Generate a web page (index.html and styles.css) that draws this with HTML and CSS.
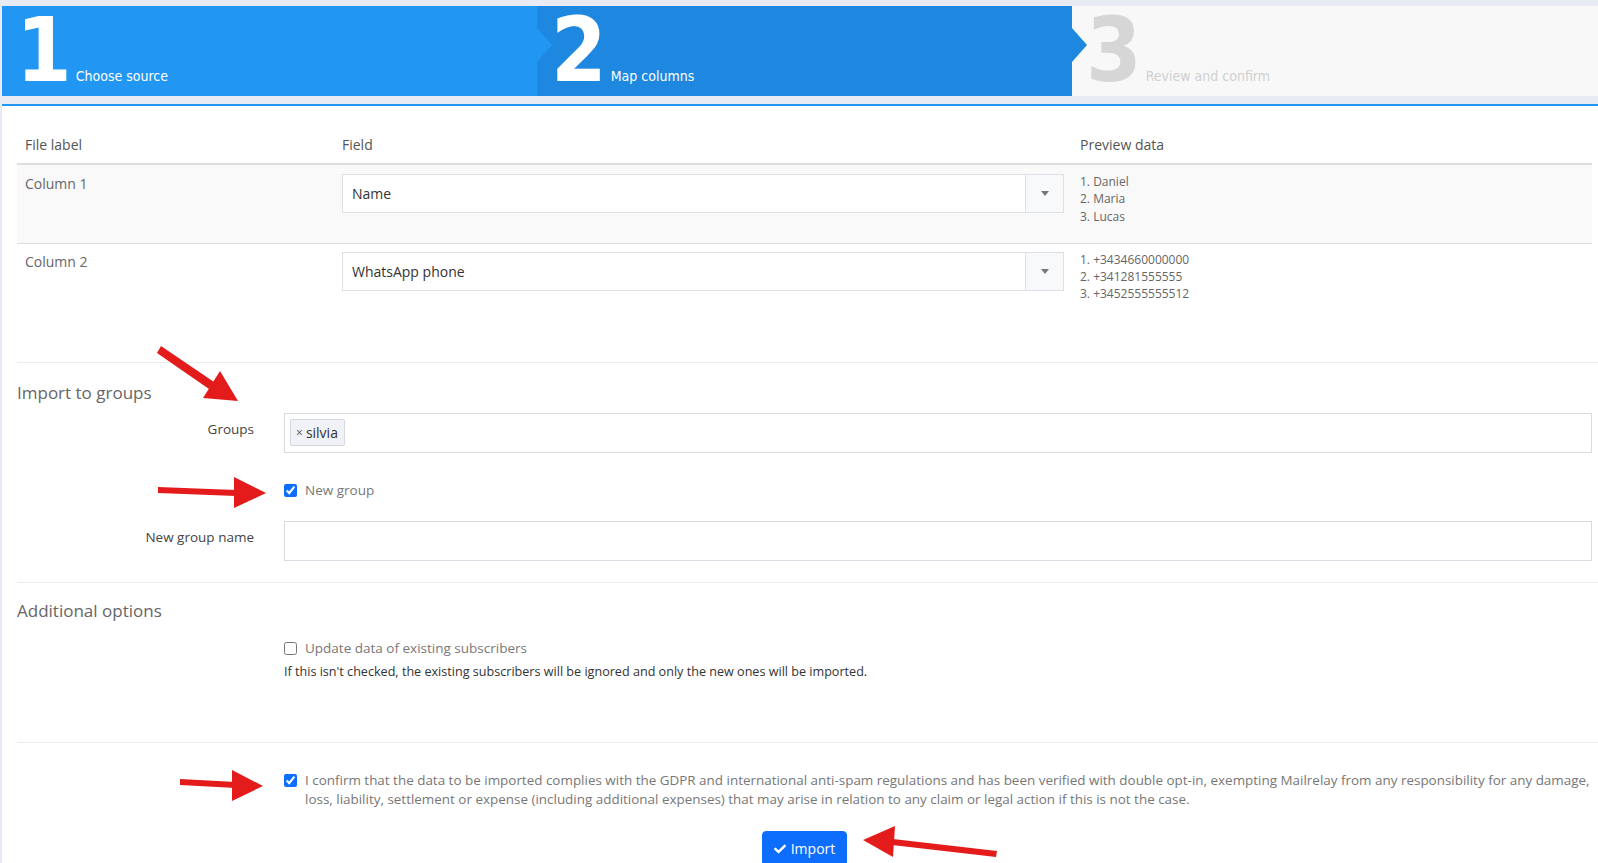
FILE: index.html
```html
<!DOCTYPE html>
<html lang="en">
<head>
<meta charset="utf-8">
<title>Import subscribers – Map columns</title>
<link rel="stylesheet" href="styles.css">
</head>
<body>
<div class="page">
  <ol class="steps">
    <li class="step step-done"><span class="step-num">1</span><span class="step-label">Choose source</span></li>
    <li class="step step-active"><span class="step-num">2</span><span class="step-label">Map columns</span></li>
    <li class="step step-todo"><span class="step-num">3</span><span class="step-label">Review and confirm</span></li>
  </ol>

  <main class="card">
    <table class="map-table">
      <thead>
        <tr>
          <th class="c-label">File label</th>
          <th class="c-field">Field</th>
          <th class="c-preview">Preview data</th>
        </tr>
      </thead>
      <tbody>
        <tr class="odd">
          <td>Column 1</td>
          <td>
            <div class="select"><span class="select-value">Name</span><span class="select-arrow"></span></div>
          </td>
          <td>
            <div class="preview">
              <div>1. Daniel</div>
              <div>2. Maria</div>
              <div>3. Lucas</div>
            </div>
          </td>
        </tr>
        <tr>
          <td>Column 2</td>
          <td>
            <div class="select"><span class="select-value">WhatsApp phone</span><span class="select-arrow"></span></div>
          </td>
          <td>
            <div class="preview">
              <div>1. +3434660000000</div>
              <div>2. +341281555555</div>
              <div>3. +3452555555512</div>
            </div>
          </td>
        </tr>
      </tbody>
    </table>

    <hr class="sep">

    <h3 class="section-title t-groups">Import to groups</h3>

    <div class="form-row row-groups">
      <label class="form-label">Groups</label>
      <div class="field tags"><span class="tag"><span class="tag-x">×</span>silvia</span></div>
    </div>

    <div class="form-row row-newgroup">
      <span></span>
      <label class="check"><input type="checkbox" checked><span>New group</span></label>
    </div>

    <div class="form-row row-groupname">
      <label class="form-label">New group name</label>
      <div class="field"></div>
    </div>

    <hr class="sep sep-2">

    <h3 class="section-title t-options">Additional options</h3>

    <div class="form-row row-update">
      <span></span>
      <label class="check"><input type="checkbox"><span>Update data of existing subscribers</span></label>
    </div>
    <div class="form-row row-help">
      <span></span>
      <p class="help">If this isn't checked, the existing subscribers will be ignored and only the new ones will be imported.</p>
    </div>

    <hr class="sep sep-3">

    <div class="form-row row-confirm">
      <span></span>
      <label class="check check-top"><input type="checkbox" checked><span class="confirm-text">I confirm that the data to be imported complies with the GDPR and international anti-spam regulations and has been verified with double opt-in, exempting Mailrelay from any responsibility for any damage,<br>loss, liability, settlement or expense (including additional expenses) that may arise in relation to any claim or legal action if this is not the case.</span></label>
    </div>

    <div class="actions">
      <button class="btn" type="button"><svg class="btn-icon" viewBox="0 0 512 512" aria-hidden="true"><path d="M173.9 439.4 7.5 273c-10-10-10-26.2 0-36.2l36.2-36.2c10-10 26.2-10 36.2 0L192 312.7 432.1 72.6c10-10 26.2-10 36.2 0l36.2 36.2c10 10 10 26.2 0 36.2L210.1 439.4c-10 10-26.2 10-36.2 0z"/></svg>Import</button>
    </div>
  </main>

  <svg class="annotations" viewBox="0 0 1598 863" aria-hidden="true">
    <g fill="#e31b1b" stroke="none">
      <polygon points="157,353 161,346 214,382 209,389"/>
      <polygon points="203,398 220,371 238,401"/>
      <polygon points="158,487 158,493 236,496 236,490"/>
      <polygon points="234,477 234,508 266,493"/>
      <polygon points="180,779 180,785 236,788 236,782"/>
      <polygon points="232,770 232,801 263,786"/>
      <polygon points="893,839 892,845 996,857 997,851"/>
      <polygon points="863,840 895,826 893,857"/>
    </g>
  </svg>
</div>
</body>
</html>
```

FILE: styles.css
```css
html, body {
  margin: 0;
  padding: 0;
}

body {
  background: #e8ebf3;
  font-family: "Open Sans", "Noto Sans", "DejaVu Sans", sans-serif;
  color: #333;
  font-size: 14px;
}

.page {
  position: relative;
  padding: 6px 0 0 2px;
}

/* ---------- steps ---------- */
.steps {
  list-style: none;
  margin: 0;
  padding: 0;
  display: grid;
  grid-template-columns: 535px 535px 1fr;
  height: 90px;
}

.step {
  position: relative;
  display: flex;
  align-items: baseline;
  height: 90px;
  box-sizing: border-box;
  padding-left: 14px;
  color: #fff;
  font-family: "DejaVu Sans", sans-serif;
  font-stretch: condensed;
}

.step-num {
  font-size: 89px;
  line-height: 88px;
  font-weight: bold;
}

.step-label {
  font-size: 14px;
  margin-left: 4px;
}

.step-done { background: #2196f3; }
.step-active { background: #1e88e0; }
.step-todo { background: #f8f8f8; }
.step-todo .step-num { color: #d6d6d6; }
.step-todo .step-label { color: #d0d0d0; }

.step-done::after,
.step-active::after {
  content: "";
  position: absolute;
  right: -15px;
  top: 22px;
  z-index: 1;
  border-top: 17.5px solid transparent;
  border-bottom: 17.5px solid transparent;
  border-left: 15px solid #2196f3;
}
.step-active::after { border-left-color: #1e88e0; }

/* ---------- card ---------- */
.card {
  margin-top: 8px;
  border-top: 2px solid #2196f3;
  background: #fff;
  padding: 0 6px 60px 15px;
  min-height: 760px;
}

/* ---------- mapping table ---------- */
.map-table {
  width: 100%;
  border-collapse: collapse;
  margin-top: 20px;
  margin-bottom: 40px;
}

.map-table th {
  text-align: left;
  font-weight: normal;
  color: #555;
  padding: 8px;
  line-height: 21px;
  border-bottom: 2px solid #ddd;
}

.c-label { width: 301px; }
.c-field { width: 722px; }

.map-table td {
  padding: 8px;
  vertical-align: top;
  color: #666;
  line-height: 19px;
}

.map-table tbody tr { height: 79px; }
.map-table tbody tr + tr td { border-top: 1px solid #ddd; padding-top: 8px; }
.map-table tr.odd { background: #f9f9f9; }
.map-table tr.odd td { padding-top: 9px; }

.select {
  display: flex;
  height: 39px;
  box-sizing: border-box;
  border: 1px solid #dde0e7;
  background: #fff;
  color: #333;
}

.select-value {
  flex: 1;
  padding-left: 9px;
  line-height: 37px;
}

.select-arrow {
  width: 37px;
  border-left: 1px solid #dde0e7;
  background: #f8f9fa;
  display: flex;
  align-items: center;
  justify-content: center;
}

.select-arrow::before {
  content: "";
  border-top: 5px solid #777;
  border-left: 4px solid transparent;
  border-right: 4px solid transparent;
}

.preview {
  font-size: 12px;
  line-height: 17.4px;
  color: #666;
  margin-top: -1px;
}

/* ---------- form ---------- */
.sep {
  border: 0;
  border-top: 1px solid #ececec;
  margin: 0 -6px 0 0;
}

.section-title {
  margin: 19px 0 0;
  font-size: 17px;
  line-height: 22px;
  font-weight: normal;
  color: #666;
}

.form-row {
  display: grid;
  grid-template-columns: 237px 1fr;
  column-gap: 30px;
}

.form-label {
  text-align: right;
  padding-top: 6px;
  line-height: 21px;
  color: #444;
  font-size: 13.5px;
}

.field {
  height: 40px;
  box-sizing: border-box;
  border: 1px solid #d9dbe3;
  background: #fff;
}

.tags {
  padding: 5px;
}

.tag {
  display: inline-flex;
  align-items: center;
  height: 27px;
  box-sizing: border-box;
  padding: 0 6px 0 5px;
  background: #f1f2f7;
  border: 1px solid #d6d8e0;
  border-radius: 2px;
  color: #333;
}

.tag-x {
  font-size: 12px;
  color: #555;
  margin-right: 3px;
}

.row-groups { margin-top: 9px; }
.row-newgroup { margin-top: 27px; }
.row-groupname { margin-top: 21px; }
.sep-2 { margin-top: 21px; }
.t-options { margin-top: 17px; }
.row-update { margin-top: 16px; }
.row-help { margin-top: 6px; }
.sep-3 { margin-top: 62px; }
.row-confirm { margin-top: 28px; }

.check {
  display: flex;
  align-items: center;
  line-height: 20px;
  color: #777;
  font-size: 13.5px;
}

.check input {
  margin: 0 8px 0 0;
  width: 13px;
  height: 13px;
  accent-color: #0d6efd;
  flex: none;
}

.check-top {
  align-items: flex-start;
  font-size: 13.45px;
  line-height: 19px;
}

.confirm-text { white-space: nowrap; }

.check-top input { margin-top: 3px; }

.help {
  margin: 0;
  font-size: 12.6px;
  line-height: 16px;
  color: #333;
}

.actions {
  margin-top: 22px;
  text-align: center;
}

.btn {
  display: inline-flex;
  align-items: center;
  gap: 5px;
  height: 35px;
  padding: 0 11px;
  border: 1px solid #0d6efd;
  border-radius: 4px;
  background: #0d6efd;
  color: #fff;
  font-family: inherit;
  font-size: 14px;
  cursor: pointer;
}

.btn-icon {
  width: 12px;
  height: 12px;
  fill: #fff;
}

/* ---------- annotation arrows ---------- */
.annotations {
  position: absolute;
  left: 0;
  top: 0;
  width: 1598px;
  height: 863px;
  pointer-events: none;
  z-index: 5;
}
```
